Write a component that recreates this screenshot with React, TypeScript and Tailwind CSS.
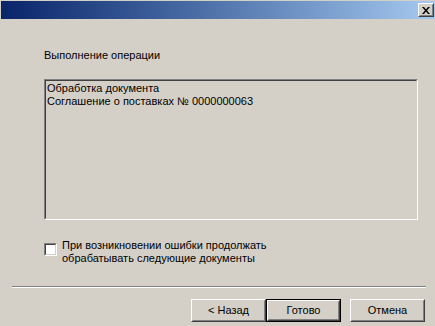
import React from "react";

const font = { fontFamily: '"Liberation Sans", Arial, sans-serif' };

function Btn({ label, def }: { label: string; def?: boolean }) {
  const inner = (
    <div className="border border-t-white border-l-white border-r-[#404040] border-b-[#404040] h-full">
      <div className="border border-t-[#d4d0c8] border-l-[#d4d0c8] border-r-[#808080] border-b-[#808080] h-full flex items-center justify-center text-[11px] text-black">
        {label}
      </div>
    </div>
  );
  return (
    <div className={def ? "w-[75px] h-[23px] border border-black" : "w-[75px] h-[23px]"}>
      {inner}
    </div>
  );
}

export default function App() {
  return (
    <div
      className="w-[435px] h-[326px] bg-[#d4d0c8] pt-[1px] pl-[1px] flex flex-col overflow-hidden"
      style={font}
    >
      <div className="h-[18px] w-[434px] bg-gradient-to-r from-[#0a246a] to-[#a6caf0] flex items-start justify-end pt-[2px] pr-[1px]">
        <div className="w-[16px] h-[14px] bg-[#d4d0c8] border border-t-white border-l-white border-r-[#404040] border-b-[#404040]">
          <div className="w-full h-full border border-t-[#d4d0c8] border-l-[#d4d0c8] border-r-[#808080] border-b-[#808080] flex items-center justify-center">
            <svg width="8" height="7" viewBox="0 0 8 7">
              <path d="M0 0h2l2 2.5L6 0h2L5 3.5 8 7H6L4 4.5 2 7H0l3-3.5z" fill="#000" />
            </svg>
          </div>
        </div>
      </div>

      <div className="pl-[43px] mt-[30px] text-[11px] leading-[13px] text-black">
        Выполнение операции
      </div>

      <div className="ml-[43px] mt-[17px] w-[374px] h-[141px] border border-t-[#808080] border-l-[#808080] border-r-white border-b-white">
        <div className="w-full h-full border border-t-[#404040] border-l-[#404040] border-r-[#d4d0c8] border-b-[#d4d0c8] px-[1px] pt-[1px] text-[11px] leading-[13px] text-black">
          <div>Обработка документа</div>
          <div>Соглашение о поставках № 0000000063</div>
        </div>
      </div>

      <div className="ml-[43px] mt-[19px] flex items-start gap-[5px]">
        <div className="mt-[4px] w-[13px] h-[13px] border border-t-[#808080] border-l-[#808080] border-r-white border-b-white shrink-0">
          <div className="w-full h-full bg-white border border-t-[#404040] border-l-[#404040] border-r-[#d4d0c8] border-b-[#d4d0c8]" />
        </div>
        <div className="text-[11px] leading-[13px] text-black">
          <div>При возникновении ошибки продолжать</div>
          <div>обрабатывать следующие документы</div>
        </div>
      </div>

      <div className="ml-[11px] mt-[21px] w-[414px] border-t border-t-[#808080] border-b border-b-white" />

      <div className="ml-[190px] mt-[11px] flex items-start">
        <Btn label="< Назад" />
        <Btn label="Готово" def />
        <div className="w-[9px]" />
        <Btn label="Отмена" />
      </div>
    </div>
  );
}
